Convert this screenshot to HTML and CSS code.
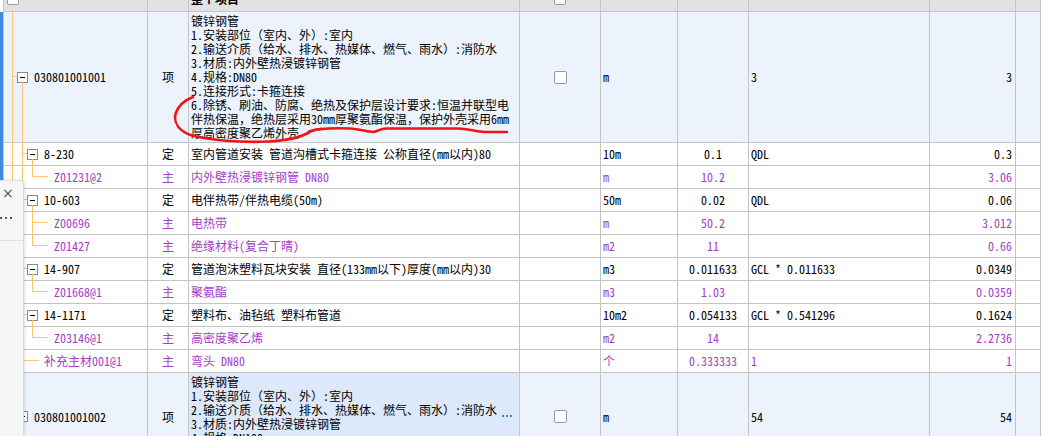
FILE: index.html
```html
<!DOCTYPE html>
<html lang="zh-CN">
<head>
<meta charset="utf-8">
<title>清单</title>
<link rel="stylesheet" href="styles.css">
</head>
<body>
<div class="page">
  <div class="stripe"></div>
  <div class="grid">
    <div class="row head">
      <div class="c1"><span class="chk"></span></div>
      <div></div>
      <div class="c3 bold">整个项目</div>
      <div class="cc"><span class="chk"></span></div>
      <div></div><div></div><div></div><div></div><div></div>
    </div>

    <div class="row item r1">
      <div class="c1 l0"><span class="box"></span>030801001001</div>
      <div class="cc">项</div>
      <div class="c3 desc">镀锌钢管<br>1.安装部位（室内、外）:室内<br>2.输送介质（给水、排水、热媒体、燃气、雨水）:消防水<br>3.材质:内外壁热浸镀锌钢管<br>4.规格:DN80<br>5.连接形式:卡箍连接<br>6.除锈、刷油、防腐、绝热及保护层设计要求:恒温并联型电<br>伴热保温，绝热层采用30mm厚聚氨酯保温，保护外壳采用6mm<br>厚高密度聚乙烯外壳</div>
      <div class="cc"><span class="chk"></span></div>
      <div class="cl">m</div>
      <div class="cc"></div>
      <div class="cl">3</div>
      <div class="cr">3</div>
      <div></div>
    </div>

    <div class="row">
      <div class="c1 l1"><span class="box"></span>8-230</div>
      <div class="cc">定</div>
      <div class="c3">室内管道安装 管道沟槽式卡箍连接 公称直径(mm以内)80</div>
      <div></div>
      <div class="cl">10m</div>
      <div class="cc">0.1</div>
      <div class="cl">QDL</div>
      <div class="cr">0.3</div>
      <div></div>
    </div>
    <div class="row p">
      <div class="c1 l2">Z01231@2</div>
      <div class="cc">主</div>
      <div class="c3">内外壁热浸镀锌钢管 DN80</div>
      <div></div>
      <div class="cl">m</div>
      <div class="cc">10.2</div>
      <div class="cl"></div>
      <div class="cr">3.06</div>
      <div></div>
    </div>
    <div class="row">
      <div class="c1 l1"><span class="box"></span>10-603</div>
      <div class="cc">定</div>
      <div class="c3">电伴热带/伴热电缆(50m)</div>
      <div></div>
      <div class="cl">50m</div>
      <div class="cc">0.02</div>
      <div class="cl">QDL</div>
      <div class="cr">0.06</div>
      <div></div>
    </div>
    <div class="row p">
      <div class="c1 l2">Z00696</div>
      <div class="cc">主</div>
      <div class="c3">电热带</div>
      <div></div>
      <div class="cl">m</div>
      <div class="cc">50.2</div>
      <div class="cl"></div>
      <div class="cr">3.012</div>
      <div></div>
    </div>
    <div class="row p">
      <div class="c1 l2">Z01427</div>
      <div class="cc">主</div>
      <div class="c3">绝缘材料(复合丁晴)</div>
      <div></div>
      <div class="cl">m2</div>
      <div class="cc">11</div>
      <div class="cl"></div>
      <div class="cr">0.66</div>
      <div></div>
    </div>
    <div class="row">
      <div class="c1 l1"><span class="box"></span>14-907</div>
      <div class="cc">定</div>
      <div class="c3">管道泡沫塑料瓦块安装 直径(133mm以下)厚度(mm以内)30</div>
      <div></div>
      <div class="cl">m3</div>
      <div class="cc">0.011633</div>
      <div class="cl">GCL * 0.011633</div>
      <div class="cr">0.0349</div>
      <div></div>
    </div>
    <div class="row p">
      <div class="c1 l2">Z01668@1</div>
      <div class="cc">主</div>
      <div class="c3">聚氨酯</div>
      <div></div>
      <div class="cl">m3</div>
      <div class="cc">1.03</div>
      <div class="cl"></div>
      <div class="cr">0.0359</div>
      <div></div>
    </div>
    <div class="row">
      <div class="c1 l1"><span class="box"></span>14-1171</div>
      <div class="cc">定</div>
      <div class="c3">塑料布、油毡纸 塑料布管道</div>
      <div></div>
      <div class="cl">10m2</div>
      <div class="cc">0.054133</div>
      <div class="cl">GCL * 0.541296</div>
      <div class="cr">0.1624</div>
      <div></div>
    </div>
    <div class="row p">
      <div class="c1 l2">Z03146@1</div>
      <div class="cc">主</div>
      <div class="c3">高密度聚乙烯</div>
      <div></div>
      <div class="cl">m2</div>
      <div class="cc">14</div>
      <div class="cl"></div>
      <div class="cr">2.2736</div>
      <div></div>
    </div>
    <div class="row p">
      <div class="c1 l1b">补充主材001@1</div>
      <div class="cc">主</div>
      <div class="c3">弯头 DN80</div>
      <div></div>
      <div class="cl">个</div>
      <div class="cc">0.333333</div>
      <div class="cl">1</div>
      <div class="cr">1</div>
      <div></div>
    </div>

    <div class="row item r2">
      <div class="c1 l0"><span class="box"></span>030801001002</div>
      <div class="cc">项</div>
      <div class="c3 desc sel">镀锌钢管<br>1.安装部位（室内、外）:室内<br>2.输送介质（给水、排水、热媒体、燃气、雨水）:消防水<br>3.材质:内外壁热浸镀锌钢管<br>4.规格:DN100<br>5.连接形式:卡箍连接<span class="more"><i></i><i></i><i></i></span></div>
      <div class="cc"><span class="chk"></span></div>
      <div class="cl">m</div>
      <div class="cc"></div>
      <div class="cl">54</div>
      <div class="cr">54</div>
      <div></div>
    </div>
  </div>

  <svg class="tree" width="60" height="436" viewBox="0 0 60 436">
    <g stroke="#fcc46e" stroke-width="1" fill="none">
      <path d="M12.5 12V436"/>
      <path d="M12 76.5H17"/>
      <path d="M22.5 82V360.5"/>
      <path d="M22 153.5H27M22 199.5H27M22 268.5H27M22 314.5H27M22 360.5H39"/>
      <path d="M32.5 159V176.5H48"/>
      <path d="M32.5 205V245.5H48M32 222.5H48"/>
      <path d="M32.5 274V291.5H48"/>
      <path d="M32.5 320V337.5H48"/>
      <path d="M12 416.5H17"/>
    </g>
  </svg>

  <svg class="mark" width="1041" height="436" viewBox="0 0 1041 436">
    <g stroke="#f01414" stroke-width="2.6" fill="none" stroke-linecap="round" stroke-linejoin="round">
      <path d="M193 97C185 100 178 106 175.5 114C173.5 123 179 131 192 135.5C210 140 240 143 268 141.5C287 140.5 301 137 309 132.5C313 130 317 129 322 129"/>
      <path d="M309 131.5C318 128.5 338 128 350 128.5C360 129 367 132 373 132C378 131.5 380 128.5 386 128.5L458 128.5C468 128.5 476 132 485 132L507 132"/>
    </g>
  </svg>

  <div class="panel">
    <div class="ptop">
      <span class="close">×</span>
      <span class="dots"><i></i><i></i><i></i></span>
    </div>
  </div>
</div>
</body>
</html>
```

FILE: styles.css
```css
html, body {
  margin: 0;
  padding: 0;
}
body {
  font-family: "Noto Sans Mono CJK SC", "Noto Sans CJK SC", monospace;
  font-size: 12px;
  color: #000;
  background: #fff;
  overflow: hidden;
}
.page {
  position: relative;
  width: 1041px;
  height: 436px;
  overflow: hidden;
  display: flex;
  align-items: flex-start;
}
.stripe {
  flex: none;
  width: 3px;
  height: 424px;
  margin-top: 12px;
  background: #3f8be0;
}
.grid {
  flex: 1;
  margin-top: -13px;
  border-left: 1px solid #c4c4c4;
}
.row {
  display: grid;
  grid-template-columns: 144px 41px 331px 81px 77px 71px 181px 86px 1fr;
  height: 23px;
  box-sizing: border-box;
  border-bottom: 1px solid #c4c4c4;
}
.row > div {
  border-right: 1px solid #c4c4c4;
  display: flex;
  align-items: center;
  overflow: hidden;
  white-space: nowrap;
  line-height: 14px;
}
.row.head {
  height: 25px;
  background: #e2e2e2;
}
.row.head .c1 {
  padding-left: 3px;
}
.bold {
  font-weight: bold;
}
.row.item {
  background: #ecf3fd;
}
.row.r1 {
  height: 131px;
}
.row.r2 {
  height: 88px;
}
.row.p {
  color: #a23fc4;
}
.c1 {
  padding-left: 12px;
}
.c1.l0 {
  padding-left: 13px;
}
.c1.l1 {
  padding-left: 23px;
}
.c1.l2 {
  padding-left: 50px;
}
.c1.l1b {
  padding-left: 40px;
}
.box {
  flex: none;
  width: 11px;
  height: 11px;
  box-sizing: border-box;
  border: 1px solid #8a8a8a;
  background: #fff;
  margin-right: 6px;
  position: relative;
}
.box::after {
  content: "";
  position: absolute;
  left: 2px;
  right: 2px;
  top: 4px;
  height: 1px;
  background: #000;
}
.cc {
  justify-content: center;
}
.c3, .cl {
  padding-left: 2px;
}
.cr {
  justify-content: flex-end;
  padding-right: 3px;
}
.desc {
  align-items: center;
}
.sel {
  background: #dde9fb;
  position: relative;
}
.chk {
  display: block;
  width: 13px;
  height: 13px;
  box-sizing: border-box;
  border: 1px solid #9a9a9a;
  border-radius: 2px;
  background: #fff;
}
.row.head .chk {
  width: 12px;
  height: 12px;
}
.more {
  position: absolute;
  right: 7px;
  top: 42px;
  display: flex;
  gap: 2px;
}
.more i {
  display: block;
  width: 2px;
  height: 2px;
  background: #3a86d6;
}
.tree {
  position: absolute;
  left: 0;
  top: 0;
  pointer-events: none;
}
.mark {
  position: absolute;
  left: 0;
  top: 0;
  pointer-events: none;
}
.panel {
  position: absolute;
  left: 0;
  top: 180px;
  width: 24px;
  height: 256px;
  box-sizing: border-box;
  background: #f6f6f6;
  border-right: 1px solid #dadada;
  border-top: 1px solid #e2e2e2;
  border-top-right-radius: 4px;
  box-shadow: 1px 0 3px rgba(0, 0, 0, 0.12);
}
.ptop {
  height: 60px;
  box-sizing: border-box;
  border-bottom: 1px solid #e0e0e0;
  display: flex;
  flex-direction: column;
}
.close {
  display: block;
  font-family: "DejaVu Sans", sans-serif;
  font-size: 14px;
  line-height: 14px;
  color: #555;
  margin-top: 5px;
  padding-left: 2px;
}
.dots {
  display: flex;
  gap: 3px;
  margin-top: 17px;
}
.dots i {
  display: block;
  width: 2px;
  height: 2px;
  background: #555;
}
```
